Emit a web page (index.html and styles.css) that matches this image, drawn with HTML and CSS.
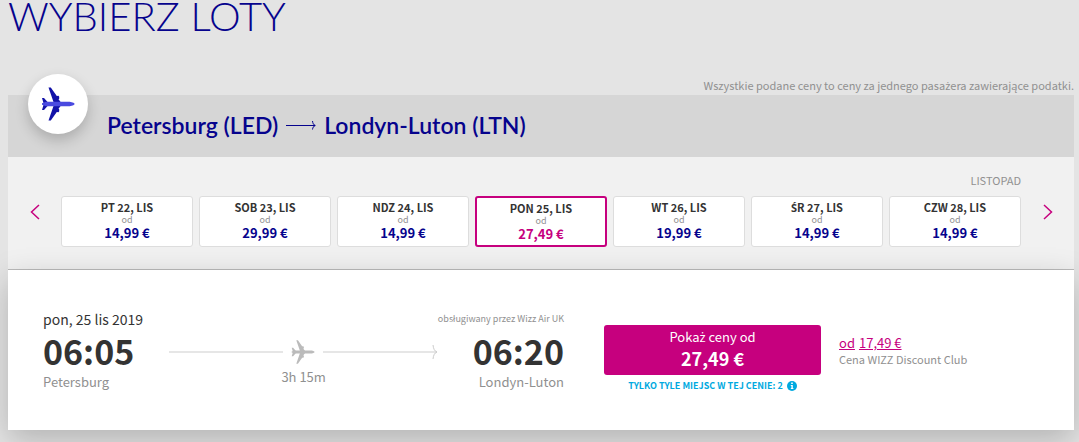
FILE: index.html
```html
<!DOCTYPE html>
<html lang="pl">
<head>
<meta charset="utf-8">
<meta name="viewport" content="width=device-width, initial-scale=1">
<title>Wybierz loty</title>
<link rel="stylesheet" href="styles.css">
</head>
<body>
<svg class="sprite" width="0" height="0" aria-hidden="true">
  <symbol id="plane-wings" viewBox="0 0 34 34">
    <path d="M1 11h2l4 4.500v3L3 23H1l1.800-6z"/>
    <path d="M7.500.5h2.300l6 8.500 1.700-.2.700 1v2l-.7.500L20 15.500v3l-2.500 3.200.7.500v2l-.7 1-1.700-.2-6 8.500H7.500L12.500 19v-4z"/>
  </symbol>
  <symbol id="plane-body" viewBox="0 0 34 34">
    <path d="M1 16.200L5 14.800h22.500c3 0 6 1 6 2.200s-3 2.200-6 2.200H5l-4-1.400z"/>
  </symbol>
</svg>
<main class="page">
  <h1 class="page-title">WYBIERZ LOTY</h1>
  <p class="tax-note">Wszystkie podane ceny to ceny za jednego pasa<span class="accented">ż</span>era zawierające podatki.</p>

  <section class="flight">
    <header class="route">
      <span class="route-badge">
        <svg viewBox="0 0 34 34" aria-hidden="true"><use href="#plane-wings" fill="#1212a8"/><use href="#plane-body" fill="#4a4ae0"/></svg>
      </span>
      <h2 class="route-name">
        <span>Petersburg (LED)</span>
        <svg class="route-arrow" viewBox="0 0 30 10" aria-label="do"><path d="M0 5.500h29M26.500 1c.3 2.500 1 3.800 2.800 4.500-1.800.7-2.500 2-2.800 4" fill="none" stroke="currentColor"/></svg>
        <span>Londyn-Luton (LTN)</span>
      </h2>
    </header>

    <div class="dates">
      <p class="month">LISTOPAD</p>
      <button class="nav" type="button" aria-label="Poprzednie dni"><svg viewBox="0 0 10 16"><path d="M9 1L1.500 8 9 15"/></svg></button>
      <ul class="days">
        <li><button class="day" type="button"><b>PT 22, LIS</b><small>od</small><strong>14,99 €</strong></button></li>
        <li><button class="day" type="button"><b>SOB 23, LIS</b><small>od</small><strong>29,99 €</strong></button></li>
        <li><button class="day" type="button"><b>NDZ 24, LIS</b><small>od</small><strong>14,99 €</strong></button></li>
        <li><button class="day day-selected" type="button" aria-pressed="true"><b>PON 25, LIS</b><small>od</small><strong>27,49 €</strong></button></li>
        <li><button class="day" type="button"><b>WT 26, LIS</b><small>od</small><strong>19,99 €</strong></button></li>
        <li><button class="day" type="button"><b><span class="accented">Ś</span>R 27, LIS</b><small>od</small><strong>14,99 €</strong></button></li>
        <li><button class="day" type="button"><b>CZW 28, LIS</b><small>od</small><strong>14,99 €</strong></button></li>
      </ul>
      <button class="nav" type="button" aria-label="Następne dni"><svg viewBox="0 0 10 16"><path d="M1 1l7.500 7L1 15"/></svg></button>
    </div>

    <article class="offer">
      <div class="trip">
        <div class="stop">
          <span class="stop-date">pon, 25 lis 2019</span>
          <time class="stop-time">06:05</time>
          <span class="stop-city">Petersburg</span>
        </div>
        <div class="track">
          <div class="track-line">
            <span class="rule"></span>
            <svg class="track-plane" viewBox="0 0 34 34" aria-hidden="true"><use href="#plane-wings"/><use href="#plane-body"/></svg>
            <span class="rule"></span>
            <svg class="track-head" viewBox="0 0 6 16" aria-hidden="true"><path d="M1 1c.5 4 1.500 6 4 7-2.500 1-3.500 3-4 7" fill="none" stroke="currentColor"/></svg>
          </div>
          <span class="duration">3h 15m</span>
        </div>
        <div class="stop stop-arrival">
          <span class="operator">obsługiwany przez Wizz Air UK</span>
          <time class="stop-time">06:20</time>
          <span class="stop-city">Londyn-Luton</span>
        </div>
      </div>
      <div class="fare">
        <button class="fare-button" type="button"><span>Poka<span class="accented">ż</span> ceny od</span><strong>27,49 €</strong></button>
        <p class="seats"><span>TYLKO TYLE MIEJSC W TEJ CENIE: 2</span>
          <svg viewBox="0 0 10 10" aria-hidden="true"><circle cx="5" cy="5" r="5" fill="#00a9e0"/><path d="M4.200 1.500h1.600v1.500H4.200zM3.800 4h2v3h.6v1H3.800V7h.6V5h-.6z" fill="#fff"/></svg>
        </p>
      </div>
      <div class="club">
        <a class="club-price" href="#club"><span>od</span> <span>17,49 €</span></a>
        <span>Cena WIZZ Discount Club</span>
      </div>
    </article>
  </section>
</main>
</body>
</html>
```
FILE: styles.css
```css
* {
  box-sizing: border-box;
}

body {
  margin: 0;
  background: #e4e4e4;
  color: #333;
  font-family: "Noto Sans CJK SC", "Noto Sans", sans-serif;
  font-size: 12px;
  line-height: 16px;
}

h1, h2, p, ul {
  margin: 0;
  padding: 0;
}

button {
  font: inherit;
  cursor: pointer;
}

.sprite {
  position: absolute;
}

/* letters the CJK family has no precomposed glyph for */
.accented {
  font-family: "Noto Sans", sans-serif;
  line-height: 0;
}

.page {
  padding: 0 5px 12px 8px;
}

.page-title {
  color: #06038d;
  font: 300 40px/32px Lato, sans-serif;
}

.tax-note {
  margin-top: 45px;
  padding-bottom: 2px;
  color: #909090;
  font-size: 11px;
  line-height: 16px;
  text-align: right;
}

.flight {
  background: #f1f1f1;
}

.route {
  position: relative;
  padding: 14px 16px 16px 99px;
  background: #d6d6d6;
}

.route-badge {
  position: absolute;
  top: -21px;
  left: 20px;
  display: grid;
  place-items: center;
  width: 60px;
  height: 60px;
  border-radius: 50%;
  background: #fff;
  box-shadow: 0 6px 14px rgba(0, 0, 0, 0.2);
}

.route-badge svg {
  width: 34px;
  height: 34px;
}

.route-name {
  display: flex;
  align-items: center;
  gap: 8px;
  color: #06038d;
  font: 600 23px/32px Lato, sans-serif;
}

.route-arrow {
  width: 30px;
  height: 10px;
}

.dates {
  display: grid;
  grid-template-columns: 53px minmax(0, 1fr) 53px;
  align-items: start;
  padding: 15px 0 22px;
  border-bottom: 1px solid #bbb;
}

.month {
  grid-column: 1 / -1;
  padding: 0 53px 8px;
  color: #909090;
  font-size: 11px;
  line-height: 16px;
  text-align: right;
}

.nav {
  justify-self: center;
  display: grid;
  padding: 8px;
  border: 0;
  background: none;
}

.nav svg {
  width: 10px;
  height: 16px;
  fill: none;
  stroke: #c6007e;
  stroke-width: 1.5;
}

.days {
  display: grid;
  grid-template-columns: repeat(7, minmax(0, 1fr));
  gap: 6px;
  list-style: none;
}

.day {
  display: flex;
  flex-direction: column;
  align-items: center;
  width: 100%;
  height: 51px;
  padding: 3px 0 0;
  border: 1px solid #ddd;
  border-radius: 3px;
  background: #fff;
  color: #06038d;
}

.day b {
  color: #333;
  font-size: 11px;
  line-height: 14px;
}

.day small {
  color: #909090;
  font-size: 9px;
  line-height: 12px;
}

.day strong {
  font-size: 13px;
  line-height: 14px;
}

.day-selected {
  border: 2px solid #c6007e;
  color: #c6007e;
}

.offer {
  display: grid;
  grid-template-columns: minmax(0, 561fr) 217px minmax(0, 218fr);
  align-items: start;
  padding: 39px 35px 36px;
  background: #fff;
  color: #909090;
  box-shadow: 0 10px 30px rgba(0, 0, 0, 0.22);
}

.trip {
  display: flex;
  gap: 35px;
  padding-right: 40px;
}

.stop {
  display: flex;
  flex-direction: column;
  white-space: nowrap;
}

.stop-arrival {
  align-items: flex-end;
  width: 91px;
}

.stop-date {
  width: 90px;
  color: #333;
  font-size: 14px;
  line-height: 20px;
}

.operator {
  font-size: 9px;
  line-height: 20px;
}

.stop-time {
  color: #333;
  font-size: 34px;
  font-weight: 700;
  line-height: 44px;
}

.stop-city {
  font-size: 13px;
  line-height: 18px;
}

.track {
  flex: 1;
  display: flex;
  flex-direction: column;
  padding-top: 31px;
}

.track-line {
  display: flex;
  align-items: center;
  height: 24px;
  color: #ccc;
}

.rule {
  flex: 1;
  height: 2px;
  background: #e6e6e6;
}

.track-plane {
  width: 24px;
  height: 24px;
  margin: 0 8px;
  fill: #bbb;
}

.track-head {
  width: 6px;
  height: 16px;
  margin-left: -5px;
}

.duration {
  font-size: 13px;
  line-height: 26px;
  text-align: center;
}

.fare {
  padding-top: 16px;
}

.fare-button {
  display: flex;
  flex-direction: column;
  align-items: center;
  width: 100%;
  padding: 3px 0 5px;
  border: 0;
  border-radius: 3px;
  background: #c6007e;
  color: #fff;
  font-size: 13px;
  line-height: 18px;
}

.fare-button strong {
  font-size: 18px;
  line-height: 24px;
}

.seats {
  display: flex;
  align-items: center;
  justify-content: center;
  gap: 4px;
  padding-top: 3px;
  color: #00a9e0;
  font-size: 9px;
  font-weight: 700;
  line-height: 16px;
  white-space: nowrap;
}

.seats svg {
  width: 10px;
  height: 10px;
}

.club {
  display: flex;
  flex-direction: column;
  padding: 26px 0 0 18px;
  font-size: 11px;
  line-height: 16px;
}

.club-price {
  display: flex;
  gap: 4px;
  color: #c6007e;
  font-size: 13px;
}
```
